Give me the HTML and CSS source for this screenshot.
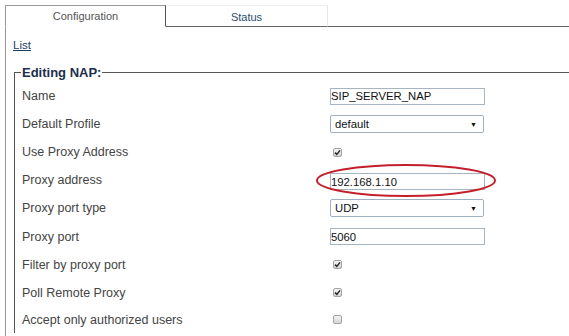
FILE: index.html
```html
<!DOCTYPE html>
<html lang="en">
<head>
    <meta charset="UTF-8">
    <title>NAP Configuration</title>
    <link rel="stylesheet" href="styles.css">
</head>
<body>

    <div class="tabs">
      <div class="tab tab-active">Configuration</div>
      <div class="tab tab-other">Status</div>
      <div class="tab-rest"></div>
    </div>

    <div class="panel">
      <a class="list-link" href="#">List</a>

      <fieldset class="nap-box">
        <legend>Editing NAP:</legend>

        <div class="row">
          <span class="label">Name</span>
          <input class="text-field" type="text" value="SIP_SERVER_NAP">
        </div>

        <div class="row">
          <span class="label">Default Profile</span>
          <div class="select-box"><span>default</span><span class="arrow">&#9660;</span></div>
        </div>

        <div class="row">
          <span class="label">Use Proxy Address</span>
          <span class="check on"><svg viewBox="0 0 9 9"><path d="M2 4.6 L3.8 6.4 L7 2.4" /></svg></span>
        </div>

        <div class="row">
          <span class="label">Proxy address</span>
          <div class="marked">
            <input class="text-field" type="text" value="192.168.1.10">
            <!-- red circle drawn over the field -->
            <svg class="circle-mark" viewBox="0 0 184 36"><ellipse cx="92" cy="17.5" rx="89" ry="15.5" /></svg>
          </div>
        </div>

        <div class="row">
          <span class="label">Proxy port type</span>
          <div class="select-box"><span>UDP</span><span class="arrow">&#9660;</span></div>
        </div>

        <div class="row">
          <span class="label">Proxy port</span>
          <input class="text-field" type="text" value="5060">
        </div>

        <div class="row">
          <span class="label">Filter by proxy port</span>
          <span class="check on"><svg viewBox="0 0 9 9"><path d="M2 4.6 L3.8 6.4 L7 2.4" /></svg></span>
        </div>

        <div class="row">
          <span class="label">Poll Remote Proxy</span>
          <span class="check on"><svg viewBox="0 0 9 9"><path d="M2 4.6 L3.8 6.4 L7 2.4" /></svg></span>
        </div>

        <div class="row">
          <span class="label">Accept only authorized users</span>
          <span class="check"></span>
        </div>
      </fieldset>
    </div>

</body>
</html>
```

FILE: styles.css
```css
html, body {
    height: 100%;
}

body {
    font-family: Arial, "Liberation Sans", sans-serif;
    background-color: white;
    color: #444;
    margin: 0;
    padding: 5px 0 0 5px;
    box-sizing: border-box;
    overflow: hidden;
    display: flex;
    flex-direction: column;
}

/* tabs */
.tabs {
    display: flex;
    height: 22px;
    flex-shrink: 0;
}

.tab {
    box-sizing: border-box;
    height: 22px;
    font-size: 11px;
    line-height: 20px;
    text-align: center;
}

.tab-active {
    width: 161px;
    border: 1px solid #999;
    border-right-color: #555;
    border-bottom: 1px solid transparent;
    color: #555;
}

.tab-other {
    width: 162px;
    border-top: 1px solid #eee;
    border-right: 1px solid #e6e6e6;
    border-bottom: 1px solid #666;
    color: #2b4d6e;
    padding-top: 1px;
}

.tab-rest {
    flex: 1;
    border-bottom: 1px solid #666;
}

/* panel */
.panel {
    flex: 1;
    min-height: 0;
    border-left: 1px solid #999;
    padding: 11px 0 0 8px;
}

.list-link {
    display: block;
    margin-left: -1px;
    font-size: 11.5px;
    line-height: 14px;
    color: #1c3f66;
    width: fit-content;
}

.nap-box {
    margin: 13px 0 0 0;
    padding: 2px 0 0 6px;
    border: 1px solid #555;
    border-right: none;
    border-bottom: none;
}

.nap-box legend {
    padding: 0 1px;
    font-size: 13px;
    font-weight: bold;
    line-height: 15px;
    color: #1b2e4b;
}

.row {
    display: flex;
    align-items: center;
    height: 28.1px;
}

.row:last-child {
    height: 26px;
}

.label {
    width: 308px;
    padding-left: 1px;
    font-size: 12.5px;
}

/* form controls */
.text-field {
    box-sizing: border-box;
    width: 155px;
    height: 17px;
    margin: 0;
    padding: 0;
    border: 1px solid #a7b4c1;
    font-family: Arial, "Liberation Sans", sans-serif;
    font-size: 11.3px;
    color: #111;
    outline: none;
}

.select-box {
    box-sizing: border-box;
    width: 154px;
    height: 18px;
    display: flex;
    align-items: center;
    justify-content: space-between;
    padding: 0 6px 0 4px;
    border: 1px solid #9fb0c0;
    border-radius: 2px;
    font-size: 11.3px;
    color: #111;
}

.select-box .arrow {
    font-size: 7px;
    color: #111;
}

.check {
    box-sizing: border-box;
    width: 9px;
    height: 9px;
    margin-left: 3px;
    border: 1px solid #a3a3a3;
    border-radius: 2px;
    background: linear-gradient(#f3f3f3, #d6d6d6);
    display: flex;
}

.check svg {
    width: 9px;
    height: 9px;
    margin: -1px;
}

.check path {
    fill: none;
    stroke: #2a2a2a;
    stroke-width: 1.5;
}

/* the hand drawn circle round the proxy address */
.marked {
    position: relative;
    height: 17px;
}

.circle-mark {
    position: absolute;
    left: -16px;
    top: -9px;
    width: 184px;
    height: 36px;
    overflow: visible;
}

.circle-mark ellipse {
    fill: none;
    stroke: #c4202c;
    stroke-width: 2;
}
```
